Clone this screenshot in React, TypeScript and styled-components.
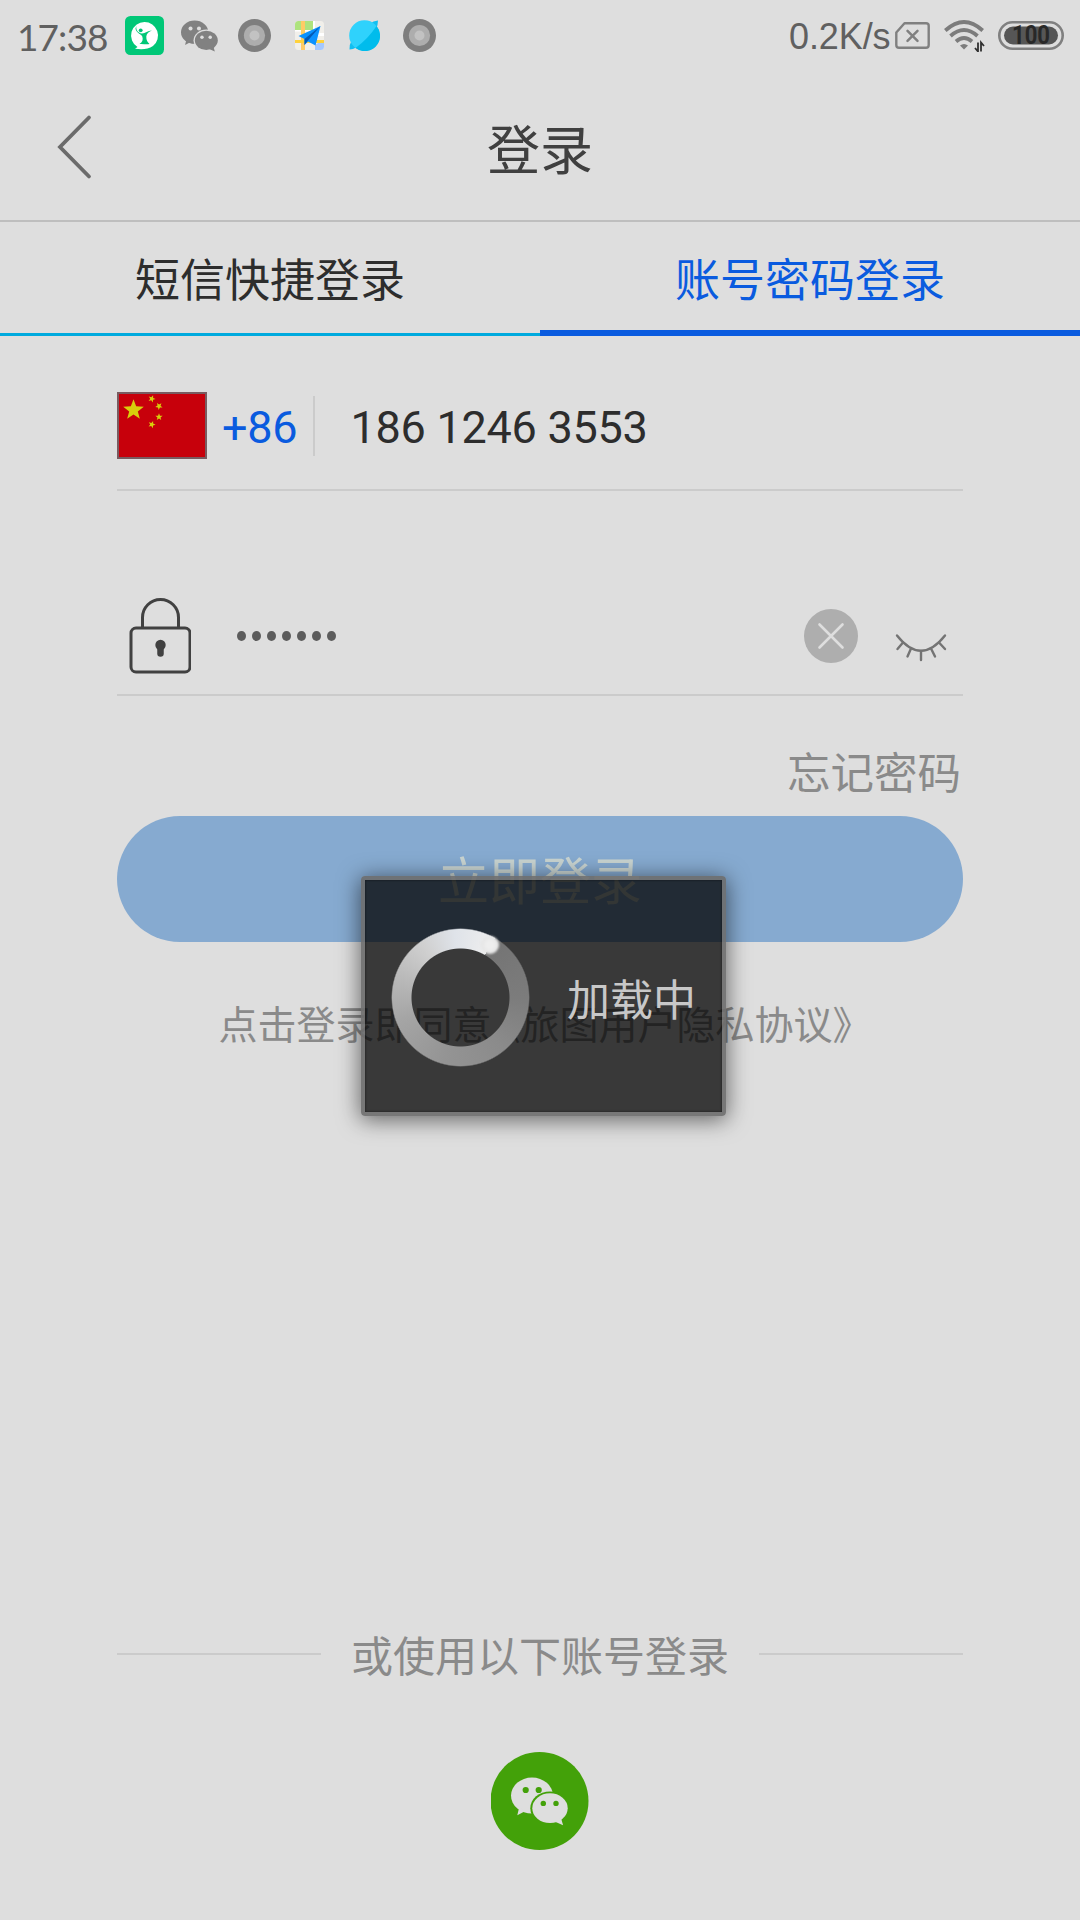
import React from "react";
import styled, { createGlobalStyle } from "styled-components";

const CJK = `"Noto Sans CJK SC", sans-serif`;

const GlobalStyle = createGlobalStyle`
  * { box-sizing: border-box; }
  body { margin: 0; background: #dedede; }
  svg { display: block; flex: none; }
`;

const Page = styled.div`
  position: relative;
  display: flex;
  flex-direction: column;
  width: 1080px;
  height: 1920px;
  overflow: hidden;
  background: #dedede;
  font-family: ${CJK};
`;

const StatusBar = styled.div`
  display: flex;
  align-items: center;
  justify-content: space-between;
  height: 72px;
  padding: 0 16px 0 17px;
`;

const StatusGroup = styled.div`
  display: flex;
  align-items: center;
`;

const StatusText = styled.span<{ $width: number; $spacing: number; $font: string; $size: number }>`
  width: ${(p) => p.$width}px;
  padding-top: 2px;
  font: 400 ${(p) => p.$size}px/44px ${(p) => p.$font};
  letter-spacing: ${(p) => p.$spacing}px;
  color: #606060;
  white-space: nowrap;
`;

const IconSlot = styled.span<{ $left: number }>`
  margin-left: ${(p) => p.$left}px;
  padding-bottom: 1px;
`;

const Header = styled.header`
  display: grid;
  grid-template-columns: 150px 1fr 150px;
  align-items: center;
  height: 150px;
  border-bottom: 2px solid #bebebe;
`;

const BackButton = styled.button`
  padding: 2px 0 0 55px;
  border: 0;
  background: none;
`;

const Title = styled.h1`
  margin: 0;
  padding-top: 1px;
  text-align: center;
  font: 400 53px/80px ${CJK};
  color: #404040;
`;

const Tabs = styled.nav`
  display: grid;
  grid-template-columns: 1fr 1fr;
  height: 114px;
`;

const Tab = styled.div<{ $active?: boolean }>`
  display: flex;
  align-items: center;
  justify-content: center;
  padding-top: ${(p) => (p.$active ? 4 : 1)}px;
  border-bottom: ${(p) => (p.$active ? "6px solid #0a5bdf" : "3px solid #00aade")};
  font-size: 45px;
  line-height: 60px;
  color: ${(p) => (p.$active ? "#0a5bdf" : "#2d2d2d")};
`;

const Form = styled.main`
  display: flex;
  flex-direction: column;
  margin: 0 117px;
`;

const Field = styled.div<{ $height: number; $top: number }>`
  display: flex;
  align-items: center;
  height: ${(p) => p.$height}px;
  padding-top: ${(p) => p.$top}px;
  border-bottom: 2px solid #cbcbcb;
`;

const FieldText = styled.span<{ $color: string; $left: number }>`
  margin-left: ${(p) => p.$left}px;
  padding-top: 4px;
  font: 400 45px/60px Roboto, sans-serif;
  letter-spacing: -0.25px;
  color: ${(p) => p.$color};
  white-space: nowrap;
`;

const FieldDivider = styled.i`
  width: 2px;
  height: 60px;
  margin-left: 16px;
  background: #cbcbcb;
`;

const LockSlot = styled.span`
  margin-left: 11px;
`;

const Mask = styled.div`
  display: flex;
  flex: 1;
  gap: 6px;
  margin-left: 46px;
`;

const MaskDot = styled.i`
  width: 9px;
  height: 10px;
  border-radius: 50%;
  background: #5c5c5c;
`;

const EyeSlot = styled.span`
  margin: 23px 16px 0 37px;
`;

const Forgot = styled.a`
  height: 120px;
  padding: 45px 2px 0 0;
  text-align: right;
  font-size: 43.5px;
  line-height: 60px;
  color: #8a8a8a;
`;

const Submit = styled.button`
  height: 126px;
  padding: 0 0 3px;
  border: 0;
  border-radius: 63px;
  background: #86aad0;
  font: 400 51px/70px ${CJK};
  color: #c9d4d1;
`;

const Agreement = styled.p`
  margin: 0;
  text-align: center;
  font-size: 39px;
  line-height: 160px;
  color: #8a8a8a;
  white-space: nowrap;
`;

const Bracket = styled.span<{ $side: "left" | "right" }>`
  margin-${(p) => p.$side}: -10px;
`;

const Footer = styled.footer`
  display: flex;
  flex-direction: column;
  align-items: center;
  gap: 68px;
  margin: auto 117px 0;
  padding-bottom: 70px;
`;

const FooterRow = styled.div`
  display: flex;
  align-items: center;
  justify-content: space-between;
  width: 100%;
  height: 60px;
  font-size: 42px;
  line-height: 60px;
  color: #8a8a8a;
`;

const Rule = styled.i`
  width: 204px;
  height: 2px;
  background: #cbcbcb;
`;

const Overlay = styled.div`
  position: absolute;
  inset: 72px 0 0 7px;
  display: flex;
  align-items: center;
  justify-content: center;
`;

const Dialog = styled.div`
  display: flex;
  align-items: center;
  width: 365px;
  height: 240px;
  padding-left: 26px;
  border: 4px solid rgba(108, 108, 108, 0.9);
  border-radius: 4px;
  background: rgba(0, 0, 0, 0.745);
  background-clip: padding-box;
  box-shadow: 0 3px 22px 1px rgba(0, 0, 0, 0.55), inset 0 0 2px 1px rgba(0, 0, 0, 0.3);
`;

const Spinner = styled.div`
  position: relative;
  flex: none;
  width: 139px;
  height: 139px;
  margin-top: 2px;

  &::before {
    content: "";
    position: absolute;
    inset: 0;
    border-radius: 50%;
    background: conic-gradient(
      from 30deg,
      #747474 0deg,
      #7c7c7c 60deg,
      #8b8b8b 110deg,
      #949494 165deg,
      #a5a5a5 220deg,
      #bababa 260deg,
      #d0d0d0 295deg,
      #dfe3e9 325deg,
      #eeeeee 360deg
    );
    mask: radial-gradient(circle, transparent 48.5px, #000 49.5px, #000 68px, transparent 69.5px);
  }

  &::after {
    content: "";
    position: absolute;
    left: 90px;
    top: 8px;
    width: 18px;
    height: 18px;
    border-radius: 50%;
    background: radial-gradient(circle, #eeeeee 30%, #dcdcdc 100%);
    filter: blur(1px);
  }
`;

const DialogText = styled.span`
  margin-left: 37px;
  padding-top: 1px;
  font-size: 43px;
  line-height: 60px;
  color: #c8c8c8;
  white-space: nowrap;
`;

const Bubbles = ({ fill, back }: { fill: string; back: string }) => (
  <g>
    <ellipse cx="41.5" cy="43.6" rx="21" ry="18" fill={fill} />
    <path d="M28.5 56 26.8 63.2 34 59.5 41 61.3Z" fill={fill} />
    <ellipse cx="59.5" cy="56.2" rx="19.7" ry="16.8" fill={back} />
    <ellipse cx="59.5" cy="56.2" rx="17.7" ry="14.9" fill={fill} />
    <path d="M64 69.5 72.6 73.2 70.5 66Z" fill={fill} />
    <circle cx="35.2" cy="38" r="3.1" fill={back} />
    <circle cx="48.2" cy="38" r="3.1" fill={back} />
    <circle cx="52.8" cy="51.4" r="2.7" fill={back} />
    <circle cx="65.5" cy="51.4" r="2.7" fill={back} />
  </g>
);

const MessengerIcon = () => (
  <svg width="39" height="39" viewBox="0 0 39 39">
    <rect width="39" height="39" rx="5.5" fill="#00c777" />
    <path d="M19.500 6A13.500 13.500 0 0 0 12.500 31L10 32.800C17 33.500 23 33.500 28 30A13.500 13.500 0 0 0 19.500 6Z" fill="#fff" />
    <circle cx="15.700" cy="14.300" r="1.900" fill="#00c777" />
    <path d="M11.500 9.500C10.500 13 12.500 17 17 17.500 20.500 17.500 22.500 14.500 27 14.500 24 15.800 21.500 17.500 21.300 20.500 21.200 24 22.500 26.300 24.500 28 21 29 18.500 27.500 14.500 28 17.500 26 18.300 23.500 17.300 20.500 16 18 11 17 10.500 12.500Z" fill="#00c777" />
  </svg>
);

const RingIcon = () => (
  <svg width="33" height="33" viewBox="0 0 33 33">
    <circle cx="16.500" cy="16.500" r="16.500" fill="#7e7e7e" />
    <circle cx="16.500" cy="16.500" r="10.600" fill="#adadad" />
    <circle cx="16.500" cy="16.500" r="5" fill="#c2c2c2" />
  </svg>
);

const MapIcon = () => (
  <svg width="29" height="29" viewBox="0 0 29 29">
    <clipPath id="map">
      <rect width="29" height="29" rx="3.500" />
    </clipPath>
    <g clipPath="url(#map)">
      <rect width="29" height="29" fill="#f1efea" />
      <path d="M0 0H18V9H0Z" fill="#aee37e" />
      <path d="M18 0h2v12h9v3H18ZM0 9h18v1.500H0Z" fill="#fff" />
      <path d="M6 0h4v29H6Z" fill="#ffcb66" />
      <path d="M0 19h29v3H0Z" fill="#ffd23c" />
      <path d="M20 24l3-2h6v7h-9Z" fill="#a4c8ff" />
    </g>
    <path d="M25.500 5 3.500 15 9.500 18 9.500 24 13 20.500 20.500 24.500Z" fill="#0a91ff" />
    <path d="M25.500 5 9.500 18 9.500 24 12.500 20Z" fill="#0459b5" />
  </svg>
);

const PlanetIcon = () => (
  <svg width="31" height="31" viewBox="0 0 31 31">
    <path d="M22 3 24.500 1.500 29 .5 28.500 5 27 9ZM2 22 .8 25 .5 29.500 4 29 8 27Z" fill="#12bff0" />
    <circle cx="15.500" cy="15.500" r="15.300" fill="#2fd2fc" />
    <path d="M27.500 6A15.300 15.300 0 0 1 6.500 28Q19 19 27.500 6Z" fill="#00bcec" />
  </svg>
);

const SimIcon = () => (
  <svg width="35" height="27" viewBox="0 0 35 27">
    <path d="M9.500 1.300H31q2.700 0 2.700 2.500V23q0 2.700-2.700 2.700H4Q1.300 25.700 1.300 23V10.500Z" fill="none" stroke="#808080" strokeWidth="2.400" strokeLinejoin="round" />
    <path d="M12.500 8.800 22.500 18.800M22.500 8.800 12.500 18.800" stroke="#808080" strokeWidth="2.500" strokeLinecap="round" />
  </svg>
);

const WifiIcon = () => (
  <svg width="41" height="32" viewBox="0 0 41 32">
    <g fill="none" stroke="#7c7c7c" strokeWidth="3.800">
      <path d="M1.300 10.500Q20 -6.500 38.700 10.500" />
      <path d="M6.500 16Q20 4 33.500 16" />
      <path d="M12 21.500Q20 14.500 28 21.500" />
    </g>
    <path d="M16 25.500Q20 22.500 24 25.500L20 29.500Z" fill="#7c7c7c" />
    <path d="M34 22.500v9L31 28M37 31.500v-9L40 26" fill="none" stroke="#303030" strokeWidth="1.800" />
  </svg>
);

const BatteryIcon = () => (
  <svg width="66" height="29" viewBox="0 0 66 29">
    <rect x="1.300" y="1.300" width="63.400" height="26.400" rx="13.200" fill="none" stroke="#808080" strokeWidth="2.600" />
    <rect x="6" y="5.500" width="54" height="18" rx="9" fill="#565656" />
    <text x="33" y="23" textAnchor="middle" textLength="38" lengthAdjust="spacingAndGlyphs" fontFamily="Roboto, sans-serif" fontWeight="700" fontSize="25" fill="#282828">
      100
    </text>
  </svg>
);

const BackIcon = () => (
  <svg width="38" height="66" viewBox="0 0 38 66">
    <path d="M34 3.500 5 33 34 62.500" fill="none" stroke="#6b6b6b" strokeWidth="3.800" strokeLinecap="round" />
  </svg>
);

const starPoints = (cx: number, cy: number, r: number, turn = 0) =>
  Array.from({ length: 10 }, (_, i) => {
    const radius = i % 2 ? r * 0.42 : r;
    const angle = ((i * 36 - 90 + turn) * Math.PI) / 180;
    return `${(cx + radius * Math.cos(angle)).toFixed(2)},${(cy + radius * Math.sin(angle)).toFixed(2)}`;
  }).join(" ");

const FlagIcon = () => (
  <svg width="90" height="67" viewBox="0 0 90 67">
    <rect width="90" height="67" fill="#795b60" />
    <rect x="2" y="2" width="86" height="63" fill="#c7000b" />
    <g fill="#d8cf0c">
      <polygon points={starPoints(16.500, 18, 10.800)} />
      <polygon points={starPoints(34.800, 6.800, 3.800, 20)} />
      <polygon points={starPoints(42, 14.200, 3.800, 40)} />
      <polygon points={starPoints(42, 25, 3.800)} />
      <polygon points={starPoints(34.800, 32.500, 3.800, 20)} />
    </g>
  </svg>
);

const LockIcon = () => (
  <svg width="63" height="76" viewBox="0 0 63 76">
    <g fill="none" stroke="#414141" strokeWidth="3">
      <rect x="3" y="30" width="59" height="44" rx="5" />
      <path d="M14.500 30V19.500a18 18 0 0 1 36 0V30" />
    </g>
    <circle cx="32.500" cy="47" r="5.200" fill="#414141" />
    <path d="M32.500 47v8.500" stroke="#414141" strokeWidth="6.500" strokeLinecap="round" />
  </svg>
);

const ClearIcon = () => (
  <svg width="54" height="54" viewBox="0 0 54 54">
    <circle cx="27" cy="27" r="27" fill="#aeaeae" />
    <path d="M15.500 15.500 38.500 38.500M38.500 15.500 15.500 38.500" stroke="#dedede" strokeWidth="2.600" strokeLinecap="round" />
  </svg>
);

const EyeIcon = () => (
  <svg width="52" height="30" viewBox="0 0 52 30">
    <g fill="none" stroke="#747474" strokeWidth="2.400" strokeLinecap="round">
      <path d="M2 2.500Q26 33 50 2.500" />
      <path d="M8 9.500 2.500 16M16 15.500 12.500 23.500M26 18V27M36 15.500 40 23.500M44 9.500 50 16" />
    </g>
  </svg>
);

export default function App() {
  return (
    <Page>
      <GlobalStyle />
      <StatusBar>
        <StatusGroup>
          <StatusText $width={108} $spacing={-0.9} $font="Lato, sans-serif" $size={37}>17:38</StatusText>
          <IconSlot $left={0}><MessengerIcon /></IconSlot>
          <IconSlot $left={17}>
            <svg width="37" height="32" viewBox="20.500 25.500 57 48"><Bubbles fill="#818181" back="#dedede" /></svg>
          </IconSlot>
          <IconSlot $left={20}><RingIcon /></IconSlot>
          <IconSlot $left={24}><MapIcon /></IconSlot>
          <IconSlot $left={25}><PlanetIcon /></IconSlot>
          <IconSlot $left={23}><RingIcon /></IconSlot>
        </StatusGroup>
        <StatusGroup>
          <StatusText $width={106} $spacing={-0.1} $font='"Liberation Sans", sans-serif' $size={36}>0.2K/s</StatusText>
          <IconSlot $left={0}><SimIcon /></IconSlot>
          <IconSlot $left={14}><WifiIcon /></IconSlot>
          <IconSlot $left={13}><BatteryIcon /></IconSlot>
        </StatusGroup>
      </StatusBar>
      <Header>
        <BackButton><BackIcon /></BackButton>
        <Title>登录</Title>
      </Header>
      <Tabs>
        <Tab>短信快捷登录</Tab>
        <Tab $active>账号密码登录</Tab>
      </Tabs>
      <Form>
        <Field $height={155} $top={26}>
          <FlagIcon />
          <FieldText $color="#0a5bdf" $left={15}>+86</FieldText>
          <FieldDivider />
          <FieldText $color="#2d2d2d" $left={35}>186 1246 3553</FieldText>
        </Field>
        <Field $height={205} $top={87}>
          <LockSlot><LockIcon /></LockSlot>
          <Mask>{Array.from({ length: 7 }, (_, i) => <MaskDot key={i} />)}</Mask>
          <ClearIcon />
          <EyeSlot><EyeIcon /></EyeSlot>
        </Field>
        <Forgot>忘记密码</Forgot>
        <Submit>立即登录</Submit>
        <Agreement>
          点击登录即同意<Bracket $side="left">《</Bracket>旅图用户隐私协议<Bracket $side="right">》</Bracket>
        </Agreement>
      </Form>
      <Footer>
        <FooterRow>
          <Rule />
          <span>或使用以下账号登录</span>
          <Rule />
        </FooterRow>
        <svg width="98" height="98" viewBox="0.500 0 98 98">
          <circle cx="49" cy="49" r="49" fill="#43a109" />
          <Bubbles fill="#dedede" back="#43a109" />
        </svg>
      </Footer>
      <Overlay>
        <Dialog>
          <Spinner />
          <DialogText>加载中</DialogText>
        </Dialog>
      </Overlay>
    </Page>
  );
}
